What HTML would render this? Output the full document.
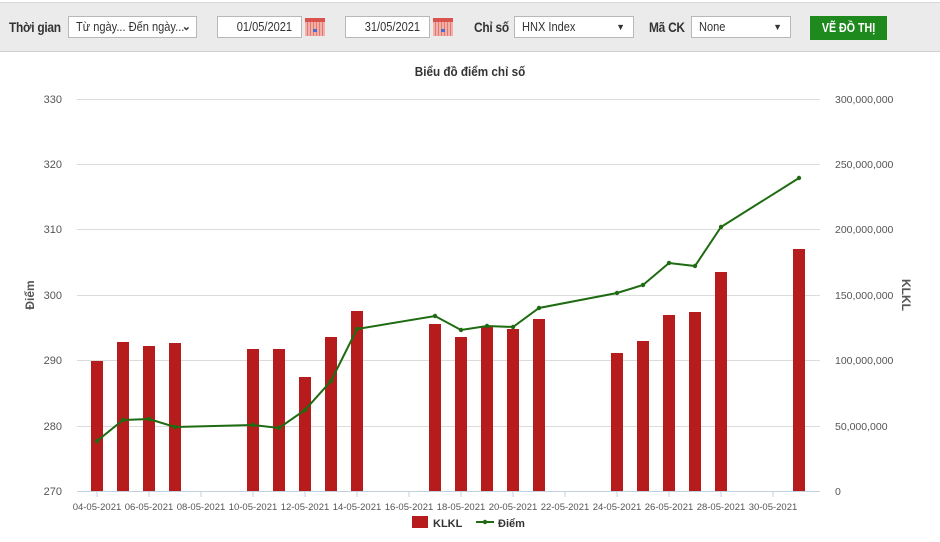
<!DOCTYPE html>
<html><head><meta charset="utf-8"><style>
body{margin:0;width:940px;height:542px;background:#fff;font-family:"Liberation Sans",sans-serif;overflow:hidden;position:relative}
.bar{position:absolute;left:0;top:2px;width:940px;height:48px;background:#ebebeb;border-top:1px solid #d8d8d8;border-bottom:1px solid #d0d0d0}
.t{position:absolute;font-size:14px;color:#333;font-weight:bold;letter-spacing:-0.3px;transform:scaleX(.85);transform-origin:left;white-space:nowrap}
.box{position:absolute;height:22px;background:#fff;border:1px solid #b8b8b8;box-sizing:border-box;font-size:13px;color:#333;line-height:20px;padding-left:7px;white-space:nowrap;overflow:hidden}
.in{display:inline-block;transform:scaleX(.85);transform-origin:left}
.cal{position:absolute;width:20px;height:18px;background:repeating-linear-gradient(90deg,#f3b0a8 0 2px,#e07a70 2px 3px);border-top:4px solid #d9534f;box-sizing:border-box}
.cal:after{content:"";position:absolute;left:8px;top:7px;width:4px;height:3px;background:#4a6fd0}
.btn{position:absolute;left:810px;top:16px;width:77px;height:24px;background:#1e8a1e;color:#fff;font-size:13px;font-weight:bold;text-align:center;line-height:24px;white-space:nowrap}
</style></head><body>
<div class="bar"></div>
<div class="t" style="left:9px;top:19px">Thời gian</div>
<div class="box" style="left:68px;top:16px;width:129px"><span class="in">Từ ngày... Đến ngày...</span><span style="position:absolute;right:5px;top:0;font-size:11px;font-weight:bold">&#x2304;</span></div>
<div class="box" style="left:217px;top:16px;width:85px;text-align:right;padding-right:0"><span class="in" style="transform-origin:right;margin-right:9px">01/05/2021</span></div>
<div class="cal" style="left:305px;top:18px"></div>
<div class="box" style="left:345px;top:16px;width:85px;text-align:right;padding-right:0"><span class="in" style="transform-origin:right;margin-right:9px">31/05/2021</span></div>
<div class="cal" style="left:433px;top:18px"></div>
<div class="t" style="left:474px;top:19px">Chỉ số</div>
<div class="box" style="left:514px;top:16px;width:120px"><span class="in">HNX Index</span><span style="position:absolute;right:8px;font-size:9px">▼</span></div>
<div class="t" style="left:649px;top:19px">Mã CK</div>
<div class="box" style="left:691px;top:16px;width:100px"><span class="in">None</span><span style="position:absolute;right:8px;font-size:9px">▼</span></div>
<div class="btn"><span style="display:inline-block;transform:scaleX(.82)">VẼ ĐỒ THỊ</span></div>
<svg width="940" height="542" style="position:absolute;left:0;top:0" font-family="Liberation Sans" >
<text x="470" y="76" text-anchor="middle" font-size="13" font-weight="bold" fill="#333" transform="translate(470 0) scale(.9 1) translate(-470 0)">Biểu đồ điểm chỉ số</text>
<g stroke="#dcdcdc" stroke-width="1">
<line x1="77" x2="820" y1="99.5" y2="99.5"/><line x1="77" x2="820" y1="164.5" y2="164.5"/><line x1="77" x2="820" y1="229.5" y2="229.5"/><line x1="77" x2="820" y1="295.5" y2="295.5"/><line x1="77" x2="820" y1="360.5" y2="360.5"/><line x1="77" x2="820" y1="426.5" y2="426.5"/>
</g>
<line x1="77" x2="820" y1="491.5" y2="491.5" stroke="#c0d0e0"/>
<g font-size="11" fill="#555" text-anchor="end">
<text x="62" y="103">330</text><text x="62" y="168">320</text><text x="62" y="233">310</text><text x="62" y="299">300</text><text x="62" y="364">290</text><text x="62" y="430">280</text><text x="62" y="495">270</text>
</g>
<g font-size="10.5" fill="#555" text-anchor="start">
<text x="835" y="103">300,000,000</text><text x="835" y="168">250,000,000</text><text x="835" y="233">200,000,000</text><text x="835" y="299">150,000,000</text><text x="835" y="364">100,000,000</text><text x="835" y="430">50,000,000</text><text x="835" y="495">0</text>
</g>
<text transform="translate(34 295) rotate(-90)" text-anchor="middle" font-size="12" font-weight="bold" fill="#555">Điểm</text>
<text transform="translate(902 295) rotate(90)" text-anchor="middle" font-size="12" font-weight="bold" fill="#555">KLKL</text>
<g fill="#b71c1c">
<rect x="91" y="361" width="12" height="130"/><rect x="117" y="342" width="12" height="149"/><rect x="143" y="346" width="12" height="145"/><rect x="169" y="343" width="12" height="148"/>
<rect x="247" y="349" width="12" height="142"/><rect x="273" y="349" width="12" height="142"/><rect x="299" y="377" width="12" height="114"/><rect x="325" y="337" width="12" height="154"/><rect x="351" y="311" width="12" height="180"/>
<rect x="429" y="324" width="12" height="167"/><rect x="455" y="337" width="12" height="154"/><rect x="481" y="326" width="12" height="165"/><rect x="507" y="329" width="12" height="162"/><rect x="533" y="319" width="12" height="172"/>
<rect x="611" y="353" width="12" height="138"/><rect x="637" y="341" width="12" height="150"/><rect x="663" y="315" width="12" height="176"/><rect x="689" y="312" width="12" height="179"/><rect x="715" y="272" width="12" height="219"/>
<rect x="793" y="249" width="12" height="242"/>
</g>
<g stroke="#c0d0e0"><line x1="97" x2="97" y1="491" y2="497"/><line x1="149" x2="149" y1="491" y2="497"/><line x1="201" x2="201" y1="491" y2="497"/><line x1="253" x2="253" y1="491" y2="497"/><line x1="305" x2="305" y1="491" y2="497"/><line x1="357" x2="357" y1="491" y2="497"/><line x1="409" x2="409" y1="491" y2="497"/><line x1="461" x2="461" y1="491" y2="497"/><line x1="513" x2="513" y1="491" y2="497"/><line x1="565" x2="565" y1="491" y2="497"/><line x1="617" x2="617" y1="491" y2="497"/><line x1="669" x2="669" y1="491" y2="497"/><line x1="721" x2="721" y1="491" y2="497"/><line x1="773" x2="773" y1="491" y2="497"/></g>
<polyline fill="none" stroke="#1e6b12" stroke-width="2" points="97,441 123,420 149,419 175,427 253,425 279,428 305,410 331,381 357,329 435,316 461,330 487,326 513,327 539,308 617,293 643,285 669,263 695,266 721,227 799,178"/>
<g fill="#1e6b12"><circle cx="97" cy="441" r="2.2"/><circle cx="123" cy="420" r="2.2"/><circle cx="149" cy="419" r="2.2"/><circle cx="175" cy="427" r="2.2"/><circle cx="253" cy="425" r="2.2"/><circle cx="279" cy="428" r="2.2"/><circle cx="305" cy="410" r="2.2"/><circle cx="331" cy="381" r="2.2"/><circle cx="357" cy="329" r="2.2"/><circle cx="435" cy="316" r="2.2"/><circle cx="461" cy="330" r="2.2"/><circle cx="487" cy="326" r="2.2"/><circle cx="513" cy="327" r="2.2"/><circle cx="539" cy="308" r="2.2"/><circle cx="617" cy="293" r="2.2"/><circle cx="643" cy="285" r="2.2"/><circle cx="669" cy="263" r="2.2"/><circle cx="695" cy="266" r="2.2"/><circle cx="721" cy="227" r="2.2"/><circle cx="799" cy="178" r="2.2"/></g>
<g font-size="9.5" fill="#555" text-anchor="middle">
<text x="97" y="510">04-05-2021</text><text x="149" y="510">06-05-2021</text><text x="201" y="510">08-05-2021</text><text x="253" y="510">10-05-2021</text><text x="305" y="510">12-05-2021</text><text x="357" y="510">14-05-2021</text><text x="409" y="510">16-05-2021</text><text x="461" y="510">18-05-2021</text><text x="513" y="510">20-05-2021</text><text x="565" y="510">22-05-2021</text><text x="617" y="510">24-05-2021</text><text x="669" y="510">26-05-2021</text><text x="721" y="510">28-05-2021</text><text x="773" y="510">30-05-2021</text>
</g>
<rect x="412" y="516" width="16" height="12" fill="#b71c1c"/>
<text x="433" y="527" font-size="11" font-weight="bold" fill="#333">KLKL</text>
<line x1="476" x2="494" y1="522" y2="522" stroke="#1e6b12" stroke-width="2"/><circle cx="485" cy="522" r="2.2" fill="#1e6b12"/>
<text x="498" y="527" font-size="11" font-weight="bold" fill="#333">Điểm</text>
</svg>
</body></html>
